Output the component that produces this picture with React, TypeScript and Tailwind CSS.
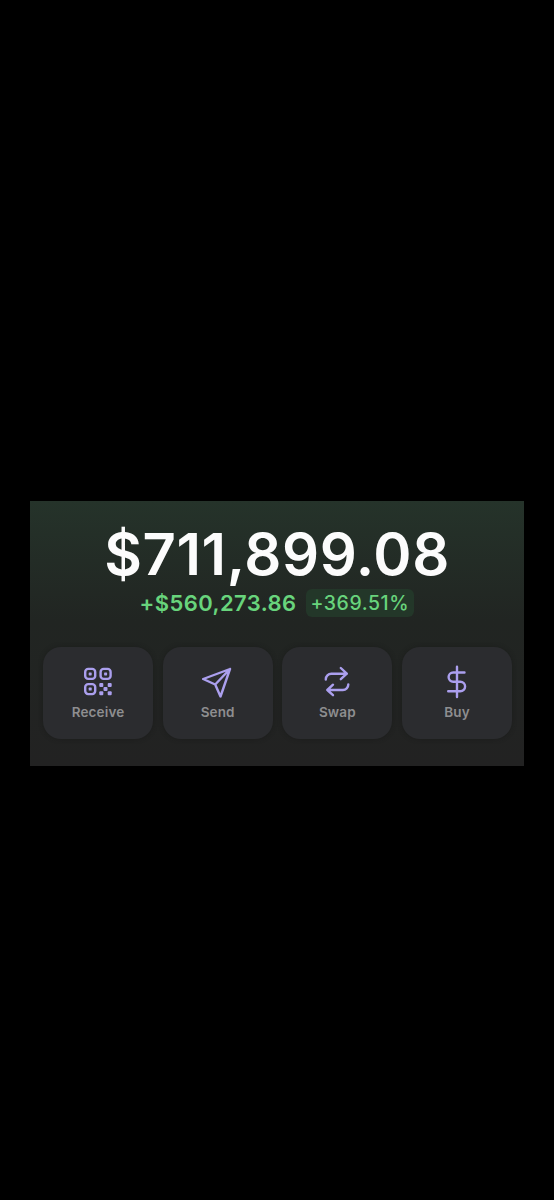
import type { ReactNode } from "react"

interface ActionProps {
  label: string
  children: ReactNode
}

function Action({ label, children }: ActionProps) {
  return (
    <button className="flex h-[92px] flex-col items-center rounded-[18px] bg-[#2b2c2f] pt-[18px] shadow-[0_0_4px_rgba(24,25,24,0.6)]">
      <svg
        width="32"
        height="34"
        viewBox="0 0 32 34"
        fill="none"
        stroke="#ab9fee"
        strokeWidth="2.4"
        strokeLinecap="round"
        strokeLinejoin="round"
      >
        {children}
      </svg>
      <span className="mt-[3px] text-[13.5px] leading-[20px] font-semibold tracking-[0.15px] text-[#8e8e90]">{label}</span>
    </button>
  )
}

function QrIcon() {
  return (
    <>
      <rect x="3.2" y="3.9" width="10" height="10" rx="3" />
      <rect x="18.6" y="3.9" width="10" height="10" rx="3" />
      <rect x="3.2" y="19.1" width="10" height="10" rx="3" />
      <g fill="#ab9fee" stroke="none">
        <rect x="6.7" y="7.4" width="3" height="3" rx="0.6" />
        <rect x="22.1" y="7.4" width="3" height="3" rx="0.6" />
        <rect x="6.7" y="22.6" width="3" height="3" rx="0.6" />
        <rect x="17.3" y="18" width="4" height="4" rx="1" />
        <rect x="25.7" y="18" width="4" height="4" rx="1" />
        <rect x="21.5" y="22.1" width="4" height="4" rx="1" />
        <rect x="17.3" y="26.3" width="4" height="4" rx="1" />
        <rect x="25.7" y="26.3" width="4" height="4" rx="1" />
      </g>
    </>
  )
}

export default function App() {
  return (
    <main className="flex min-h-screen flex-col bg-black px-[30px] pt-[501px] font-['Inter',sans-serif]">
      <section className="h-[265px] bg-linear-to-b from-[#25332a] via-[#212522] via-45% to-[#222222] px-[13px] pt-[18px]">
        <div className="flex h-[70px] items-center justify-center text-[58px] font-semibold tracking-[0.6px] whitespace-nowrap text-[#fcfcfc]">
          $711,899.08
        </div>
        <div className="flex h-[28px] items-center justify-center gap-[10px] whitespace-nowrap text-[#68d47c]">
          <span className="pt-px text-[22px] font-semibold tracking-[0.4px]">+$560,273.86</span>
          <span className="flex h-[28px] w-[108px] items-center rounded-[6px] bg-[#233729] pt-[2px] pl-[4px] text-[19.5px] font-medium tracking-[0.55px]">
            +369.51%
          </span>
        </div>
        <div className="-mr-px mt-[30px] grid grid-cols-4 gap-[9.6px]">
          <Action label="Receive">
            <QrIcon />
          </Action>
          <Action label="Send">
            <path d="M28 4 1.2 14l12 5.5 5.3 12L28 4ZM28 4 13.2 19.5" />
          </Action>
          <Action label="Swap">
            <path d="M4.8 14.5v-.3a5.5 5.5 0 0 1 5.5-5.5h15.5M19.8 3l6 5.7-6 5.5M27.3 19.5v.1a5.4 5.4 0 0 1-5.4 5.4H6.3M12 19.7 6.3 25l5.7 5.2" />
          </Action>
          <Action label="Buy">
            <path d="M16 1.7V32M23.5 7.5H12.2a4.6 4.6 0 0 0 0 9.2h7.1a4.8 4.8 0 0 1 0 9.6H7.2" />
          </Action>
        </div>
      </section>
    </main>
  )
}
